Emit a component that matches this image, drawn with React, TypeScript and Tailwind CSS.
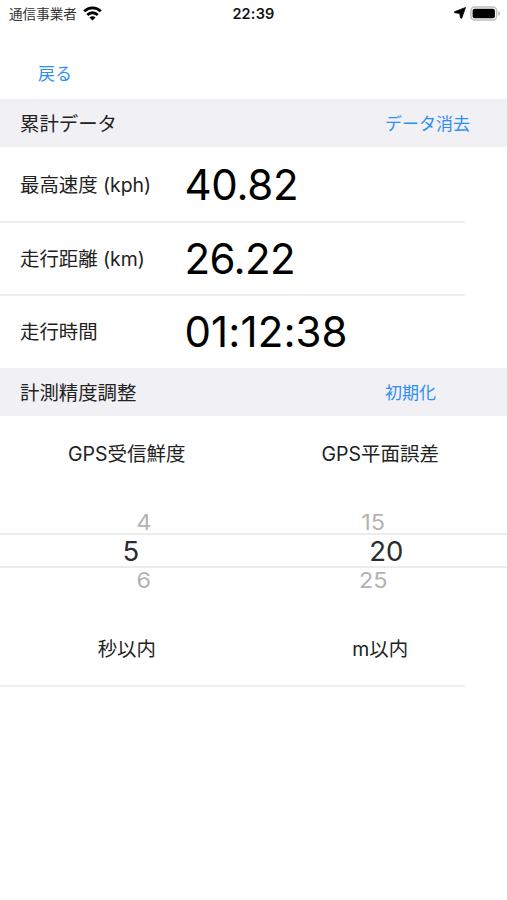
import clsx from "clsx";

interface PickerProps {
  title: string;
  unit: string;
  previous: string;
  current: string;
  next: string;
  side: "left" | "right";
}

const stats = [
  { label: "最高速度 (kph)", value: "40.82", tracking: "tracking-[-0.3px]" },
  { label: "走行距離 (km)", value: "26.22", tracking: "tracking-[-0.6px]" },
  { label: "走行時間", value: "01:12:38", tracking: "tracking-[0.1px]" },
];

function StatusBar() {
  return (
    <div className="grid h-7 grid-cols-3 items-center pr-[6px] pl-[9px]">
      <div className="flex items-center gap-[6px]">
        <span className="pt-[2px] text-[13.6px] leading-none text-[#333]">通信事業者</span>
        <svg className="-mt-[2px]" width="19" height="15" viewBox="0 0 19 15" fill="none" stroke="#000" strokeWidth="2.8">
          <path d="M1.2 5.3a11.8 11.8 0 0 1 16.6 0" />
          <path d="M4.3 8.9a7.4 7.4 0 0 1 10.4 0" />
          <path d="M9.5 14.6 6.5 11.6a4.2 4.2 0 0 1 6 0Z" fill="#000" stroke="none" />
        </svg>
      </div>
      <span className="pr-[3px] text-center text-[14.5px] leading-none font-semibold tracking-[0.2px] text-[#111]">
        22:39
      </span>
      <div className="-mt-[2px] flex items-center justify-end gap-[4px]">
        <svg width="12" height="12" viewBox="0 0 12 12">
          <path d="M11.5.5 7.7 11.3 6.5 10.9 5.7 6.4.7 5.7.5 4.7Z" fill="#000" stroke="#000" strokeWidth=".8" strokeLinejoin="round" />
        </svg>
        <svg width="31" height="15" viewBox="0 0 31 15">
          <rect x=".9" y=".9" width="25.7" height="13.2" rx="4" fill="#fff" stroke="#bdbdbd" strokeWidth="1.5" />
          <rect x="2.6" y="2.8" width="22.3" height="9.4" rx="2" fill="#000" />
          <path d="M28.3 5.2c2.4.7 2.4 3.9 0 4.6Z" fill="#b5b5b5" />
        </svg>
      </div>
    </div>
  );
}

function SectionHeader({ title, action }: { title: string; action: string }) {
  return (
    <div className="flex h-12 items-center bg-[#f1f0f5] pt-[3px] pl-5">
      <h2 className="w-[365px] text-[19.4px] text-[#222]">{title}</h2>
      <button className="text-[17px] text-[#2e8ff0]">{action}</button>
    </div>
  );
}

function Picker({ title, unit, previous, current, next, side }: PickerProps) {
  // Rows off the centre curve toward the middle of the two wheels
  const offset = side === "left" ? "translate-x-[17px]" : "-translate-x-[7px]";

  return (
    <div className="flex flex-1 flex-col items-center">
      <div className="flex h-[76px] items-center pt-[2px] text-[19.5px] text-[#222]">{title}</div>
      <div className={clsx("mt-[18px] flex h-6 scale-y-94 items-end text-[23.5px] leading-[22px] text-[#b3b3b3]", offset)}>
        {previous}
      </div>
      <div
        className={clsx(
          "-mt-px flex h-[35px] w-full items-center justify-center border-y-2 border-[#ececec] pt-[2px] text-[27.5px] leading-none text-[#2c2c2c]",
          side === "left" ? "pl-[8px]" : "pl-[12px]",
        )}
      >
        {current}
      </div>
      <div className={clsx("flex h-6 scale-y-94 items-start text-[23.5px] leading-6 text-[#b3b3b3]", offset)}>
        {next}
      </div>
      <div className="mt-[43px] flex h-[28px] items-center pt-[2px] text-[19.4px] text-[#222]">{unit}</div>
    </div>
  );
}

export default function App() {
  return (
    <main className="min-h-[900px] w-full overflow-hidden bg-white font-['Inter','Noto_Sans_CJK_JP',sans-serif]">
      <StatusBar />

      <nav className="flex h-[71px] items-center pt-[21px] pl-[38px]">
        <button className="text-[17px] leading-none text-[#2e8ff0]">戻る</button>
      </nav>

      <section>
        <SectionHeader title="累計データ" action="データ消去" />
        <div className="h-[220px]">
          {stats.map(({ label, value, tracking }, i) => (
            <div key={label}>
              <div className={clsx("flex items-center pl-5", i === 0 ? "h-[74px] pt-[2px]" : "h-[71px]")}>
                <span className="w-[164.5px] shrink-0 pt-[2px] text-[19.4px] text-[#222]">{label}</span>
                <span className={clsx("text-[42px] leading-none text-black", tracking)}>{value}</span>
              </div>
              {i < stats.length - 1 && <div className="h-[2px] w-[465px] bg-[#efefef]" />}
            </div>
          ))}
        </div>
      </section>

      <section className="pt-px">
        <SectionHeader title="計測精度調整" action="初期化" />
        <div className="flex">
          <Picker title="GPS受信鮮度" unit="秒以内" previous="4" current="5" next="6" side="left" />
          <Picker title="GPS平面誤差" unit="m以内" previous="15" current="20" next="25" side="right" />
        </div>
        <div className="mt-[22px] h-[2px] w-[465px] bg-[#f0f0f0]" />
      </section>
    </main>
  );
}
